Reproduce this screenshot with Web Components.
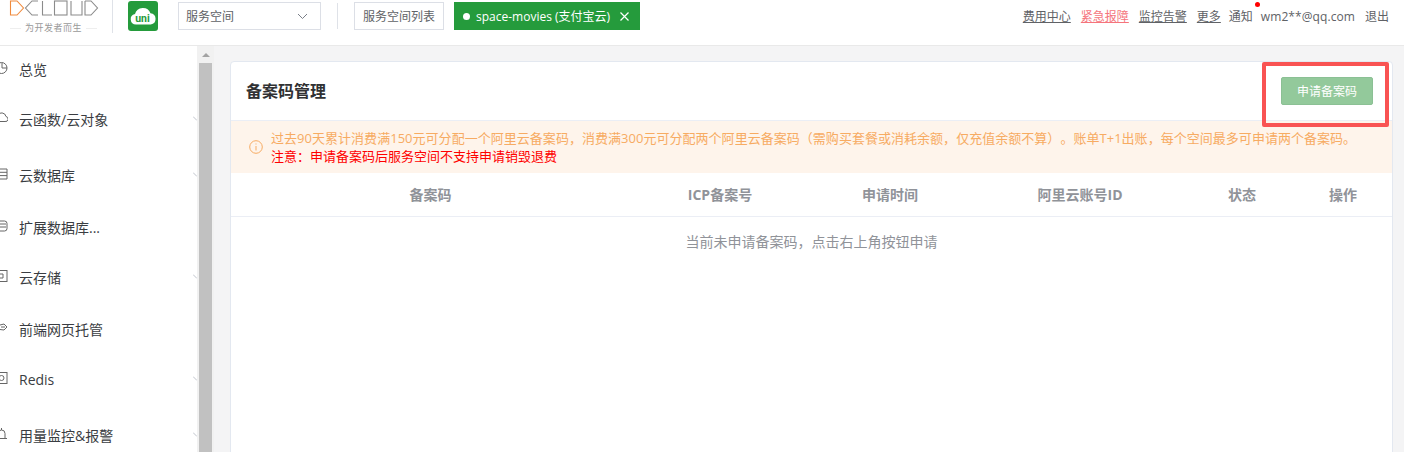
<!DOCTYPE html>
<html lang="zh"><head><meta charset="utf-8"><title>备案码管理</title>
<style>
html,body{margin:0;height:452px;overflow:hidden;background:#fff}
body{font-family:"Open Sans","Noto Sans CJK SC",sans-serif;font-size:12px;color:#333;display:flex;flex-direction:column}
</style></head><body>
<top-bar>
  <top-link slot="links">费用中心</top-link>
  <top-link slot="links" tone="alert">紧急报障</top-link>
  <top-link slot="links">监控告警</top-link>
  <top-link slot="links">更多</top-link>
  <top-link slot="links" plain dot tight>通知</top-link>
  <top-link slot="links" plain tight mail>wm2**@qq.com</top-link>
  <top-link slot="links" plain>退出</top-link>
</top-bar>
<app-body>
  <side-nav slot="nav">
    <nav-item chev-off icon="clock">总览</nav-item>
    <nav-item icon="cloud">云函数/云对象</nav-item>
    <nav-item gap="6" icon="db">云数据库</nav-item>
    <nav-item gap="2" chev-off icon="ext">扩展数据库...</nav-item>
    <nav-item icon="box">云存储</nav-item>
    <nav-item gap="2" chev-off icon="web">前端网页托管</nav-item>
    <nav-item icon="redis">Redis</nav-item>
    <nav-item gap="6" icon="bell">用量监控&amp;报警</nav-item>
  </side-nav>
  <code-card slot="main"></code-card>
</app-body>
<script>
function def(name, css, html, init){
  customElements.define(name, class extends HTMLElement{
    connectedCallback(){
      if(this.shadowRoot) return;
      const r=this.attachShadow({mode:'open'});
      r.innerHTML='<style>'+css+'</style>'+(typeof html==='function'?html(this):html);
      if(init) init(this,r);
    }
  });
}
def('dc-logo',`:host{display:block;width:112px;height:45px;flex:none}
 svg{display:block}
 .tag{display:flex;align-items:center;gap:4px;margin:3px 0 0 10px;width:87px;font-size:9px;line-height:14px;color:#9a9a9a;letter-spacing:.5px;white-space:nowrap}
 .tag i{flex:1;height:1px;background:#eee}`,
 `<svg width="112" height="18" viewBox="0 0 112 18" fill="none" stroke-width="1.100"><path stroke="#f08a3c" d="M10.500 1V15H17L23.500 8L17 1Z"/><g stroke="#8b8b8b"><path d="M38 1H32L25.500 8L32 15H38"/><path d="M42.500 1V15H52"/><rect x="54.500" y="1" width="12.500" height="14"/><path d="M71 1V15H82V1"/><path d="M85 1V15H91L97.500 8L91 1H85"/></g></svg>
 <div class="tag"><i></i><span>为开发者而生</span><i></i></div>`);
def('uni-mark',`:host{display:block;width:30px;height:30px;flex:none;align-self:flex-start;margin-top:1px}svg{display:block}`,
 `<svg width="30" height="30" viewBox="0 0 30 30"><rect width="30" height="30" rx="3" fill="#259b3c"/><path d="M8 23.500a5.300 5.300 0 0 1-1-10.500a8.200 8.200 0 0 1 15.500-.8a5.700 5.700 0 0 1 .2 11.300z" fill="#fff"/><text x="14.500" y="20.500" text-anchor="middle" font-family="Roboto,sans-serif" font-weight="700" font-size="10.500" fill="#259b3c">uni</text></svg>`);
def('space-select',`:host{display:flex;align-items:center;justify-content:space-between;box-sizing:border-box;width:143px;height:28px;border:1px solid #dcdfe6;padding:0 12px 0 7px;color:#606266;font-size:12px;flex:none}`,
 `<span>服务空间</span><svg width="11" height="7" viewBox="0 0 11 7" fill="none" stroke="#7a7f88"><path d="M1 1l4.500 4.500L10 1"/></svg>`);
def('outline-btn',`:host{display:flex;align-items:center;box-sizing:border-box;height:28px;border:1px solid #dcdfe6;padding:0 8px;color:#606266;font-size:12px;flex:none}`,`<slot></slot>`);
def('space-tag',`:host{display:flex;align-items:center;box-sizing:border-box;width:186px;height:28px;background:#259b3c;color:#fff;font-size:12px;padding:0 11px 0 9px;flex:none;white-space:nowrap}
 i{width:7px;height:7px;border-radius:50%;background:#fff;margin-right:6px;flex:none}
 svg{margin-left:auto}`,
 `<i></i><span><slot></slot></span><svg width="9" height="9" viewBox="0 0 9 9" stroke="#fff" stroke-width="1.200"><path d="M.5.5l8 8M8.500.5l-8 8"/></svg>`);
def('top-link',`:host{display:block;position:relative;color:#606266;font-size:12px;text-decoration:underline;white-space:nowrap}
 :host([tone=alert]){color:#f5747c}
 :host([plain]){text-decoration:none}
 :host([tight]){margin-left:-2px}
 :host([mail]){letter-spacing:.08px}
 b{position:absolute;right:-7.500px;top:-6px;width:5px;height:5px;border-radius:50%;background:#f00}`,
 el=>`<slot></slot>${el.hasAttribute('dot')?'<b></b>':''}`);
def('top-bar',`:host{display:flex;align-items:flex-start;box-sizing:border-box;height:46px;border-bottom:1px solid #e9e9e9;flex:none;background:#fff}
 .div{width:1px;height:33px;background:#dfe2e8;flex:none}
 .sp{padding-top:2px;display:flex;align-items:flex-start}
 .links{margin-left:auto;display:flex;gap:10px;padding:8px 15px 0 0;line-height:17px}`,
 `<dc-logo></dc-logo><div class="div"></div><uni-mark style="margin-left:15px"></uni-mark>
 <div class="sp" style="margin-left:20px"><space-select></space-select></div>
 <div class="div" style="margin-left:16px;height:26px;margin-top:3px"></div>
 <div class="sp" style="margin-left:16px"><outline-btn>服务空间列表</outline-btn></div>
 <div class="sp" style="margin-left:10px"><space-tag>space-movies (支付宝云)</space-tag></div>
 <div class="links"><slot name="links"></slot></div>`);
def('app-body',`:host{display:flex;flex:1;min-height:0;overflow:hidden}
 .nav{width:197px;flex:none;background:#fff;overflow:hidden}
 .bar{box-sizing:border-box;width:17px;padding:0 2px;flex:none;background:#f1f1f1;display:flex;flex-direction:column}
 .arrow{height:17px;display:flex;align-items:center;justify-content:center;flex:none}
 .arrow i{width:0;height:0;border:4px solid transparent;border-top:0;border-bottom:4px solid #a3a3a3}
 .thumb{flex:1;background:#c1c1c1}
 .main{flex:1;min-width:0;background:#f4f4f5;padding:15px 11px 0 16px}`,
 `<div class="nav"><slot name="nav"></slot></div><div class="bar"><div class="arrow"><i></i></div><div class="thumb"></div></div><div class="main"><slot name="main"></slot></div>`);
def('side-nav',`:host{display:block;margin-top:-2px}`,`<slot></slot>`);
const icons={
 clock:'<circle cx="1.500" cy="7" r="5.500"/><path d="M2 2v5H7"/>',
 cloud:'<path d="M-4 10.500h9a2.500 2.500 0 0 0 1-5a4.500 4.500 0 0 0-8.500-1"/>',
 db:'<path d="M-3 2h10v10h-10zM-3 5.300h10M-3 8.600h10"/>',
 ext:'<rect x="-4" y="2" width="11" height="10" rx="2.500"/><path d="M-3 5h9M-3 8h9"/>',
 box:'<rect x="-4" y="1.500" width="11" height="11"/><path d="M-1 5h4v4h-4z"/>',
 web:'<path d="M-4 5l8-2l3 3l-3 3l-8 -1"/><path d="M1 6h4"/>',
 redis:'<rect x="-4" y="1.500" width="11" height="11"/><circle cx="1.500" cy="7" r="2.500"/>',
 bell:'<path d="M-4 11.500h11M-2 11.500v-5a3.500 3.500 0 0 1 7 0v5M1.500 1v2"/>'
};
def('nav-item',`:host{display:flex;align-items:center;position:relative;height:50px;color:#3a3d42;font-size:14px;white-space:nowrap}
 svg.i{position:absolute;left:0;top:50%;margin-top:-8px}
 span{margin-left:19px}
 svg.c{position:absolute;right:0;top:50%;margin-top:-3px}`,
 el=>`<svg class="i" width="8" height="14" viewBox="0 0 8 14" fill="none" stroke="#666" stroke-width="1">${icons[el.getAttribute('icon')]}</svg><span><slot></slot></span>${el.hasAttribute('chev-off')?'':'<svg class="c" width="4" height="5" viewBox="0 0 4 5" fill="none" stroke="#c0c4cc"><path d="M0 .5L4 4.500"/></svg>'}`,
 el=>{el.style.marginTop=(el.getAttribute('gap')||0)+'px'});
def('code-card',`:host{display:block;box-sizing:border-box;height:420px;background:#fff;border:1px solid #e3e8f0;border-radius:4px;position:relative;color:#333}
 header{display:flex;align-items:center;justify-content:space-between;box-sizing:border-box;height:59px;padding:0 19px 0 15px;border-bottom:1px solid #ebeef5}
 h2{margin:0;padding-bottom:2px;font-size:16px;font-weight:700;color:#303133}
 .apply{box-sizing:border-box;width:92px;height:28px;display:flex;align-items:center;justify-content:center;background:#93c99b;border:1px solid #8bc094;border-radius:2px;color:#fff;font-size:12px}
 .alert{display:flex;align-items:center;box-sizing:border-box;height:52px;background:#fef4eb;padding:0 0 0 18px;font-size:13px;line-height:18px;color:#f7ab62;white-space:nowrap;text-spacing-trim:space-all}
 .alert svg{flex:none;margin-right:8px}
 .first{letter-spacing:.03px}
 .red{color:#f00}
 .row{display:grid;box-sizing:border-box;grid-template-columns:399px 180px 160px 220px 104px 1fr;height:44px;padding-bottom:2px;align-items:center;text-align:center;font-size:14px;font-weight:700;color:#909399;border-bottom:1px solid #ebeef5}
 .empty{text-align:center;font-size:14px;color:#909399;line-height:20px;padding-top:15px}
 .mark{position:absolute;box-sizing:border-box;left:1031px;top:0;width:127px;height:65px;border:4px solid #f95353;border-radius:2px}`,
 `<header><h2>备案码管理</h2><div class="apply">申请备案码</div></header>
 <div class="alert"><svg width="14" height="14" viewBox="0 0 14 14" fill="none" stroke="#f7ab62"><circle cx="7" cy="7" r="6.300"/><path d="M7 3.500v1M7 6v4.500"/></svg><div><span class="first">过去90天累计消费满150元可分配一个阿里云备案码，消费满300元可分配两个阿里云备案码（需购买套餐或消耗余额，仅充值余额不算）。账单T+1出账，每个空间最多可申请两个备案码。</span><br><span class="red">注意：申请备案码后服务空间不支持申请销毁退费</span></div></div>
 <div class="row"><div>备案码</div><div>ICP备案号</div><div>申请时间</div><div>阿里云账号ID</div><div>状态</div><div>操作</div></div>
 <div class="empty">当前未申请备案码，点击右上角按钮申请</div>
 <div class="mark"></div>`);
</script>
</body></html>
